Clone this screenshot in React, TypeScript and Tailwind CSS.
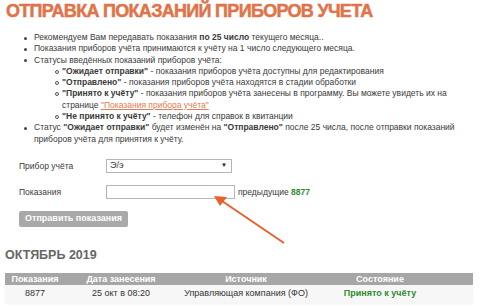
import React from "react";

function Dot() {
  return (
    <span className="w-[10px] shrink-0 flex justify-start items-start pt-[4.5px]">
      <span className="block w-[3px] h-[3px] rounded-full bg-[#444]" />
    </span>
  );
}
function Circ() {
  return (
    <span className="w-[7px] shrink-0 flex items-start pt-[4px]">
      <span className="block w-[4px] h-[4px] rounded-full border border-[#555]" />
    </span>
  );
}

export default function App() {
  return (
    <div
      className="relative w-[480px] h-[307px] overflow-hidden bg-white text-[#3a3a3a]"
      style={{ fontFamily: '"Liberation Sans", Arial, sans-serif' }}
    >
      <h1 className="pl-[6px] pt-[1px] text-[18px] leading-[20px] tracking-[-0.7px] font-bold text-[#df744a] [-webkit-text-stroke:0.5px_#df744a] whitespace-nowrap">
        ОТПРАВКА ПОКАЗАНИЙ ПРИБОРОВ УЧЕТА
      </h1>

      <ul className="mt-[11px] text-[8.5px] leading-[11.3px] whitespace-nowrap">
        <li className="flex pl-[24px]">
          <Dot />
          <span>
            Рекомендуем Вам передавать показания <b>по 25 число</b> текущего месяца..
          </span>
        </li>
        <li className="flex pl-[24px]">
          <Dot />
          <span>Показания приборов учёта принимаются к учёту на 1 число следующего месяца.</span>
        </li>
        <li className="flex pl-[24px]">
          <Dot />
          <span>Статусы введённых показаний приборов учёта:</span>
        </li>
        <li className="flex pl-[55px]">
          <Circ />
          <span>
            <b>"Ожидает отправки"</b> - показания приборов учёта доступны для редактирования
          </span>
        </li>
        <li className="flex pl-[55px]">
          <Circ />
          <span>
            <b>"Отправлено"</b> - показания приборов учёта находятся в стадии обработки
          </span>
        </li>
        <li className="flex pl-[55px]">
          <Circ />
          <span>
            <b>"Принято к учёту"</b> - показания приборов учёта занесены в программу. Вы можете увидеть их на
            <br />
            странице{" "}
            <span className="underline text-[#e07b53]">"Показания прибора учёта"</span>
          </span>
        </li>
        <li className="flex pl-[55px]">
          <Circ />
          <span>
            <b>"Не принято к учёту"</b> - телефон для справок в квитанции
          </span>
        </li>
        <li className="flex pl-[24px]">
          <Dot />
          <span>
            Статус <b>"Ожидает отправки"</b> будет изменён на <b>"Отправлено"</b> после 25 числа, после отправки показаний
            <br />
            приборов учёта для принятия к учёту.
          </span>
        </li>
      </ul>

      <div className="mt-[14px] pl-[19px] flex flex-col text-[8.5px]">
        <div className="flex items-center h-[14px]">
          <span className="w-[87px]">Прибор учёта</span>
          <div className="w-[126px] h-[14px] border border-[#b5b5b5] bg-white flex items-center justify-between pl-[3px] pr-[4px] text-[9px] text-[#333]">
            <span>Э/э</span>
            <span className="text-[6px] text-[#222]">▼</span>
          </div>
        </div>
        <div className="flex items-center h-[14px] mt-[12px]">
          <span className="w-[87px]">Показания</span>
          <div className="w-[129px] h-[14px] border border-[#b5b5b5] bg-white" />
          <span className="ml-[3px]">
            предыдущие <span className="text-[#2e8b2e] font-bold">8877</span>
          </span>
        </div>
        <div className="mt-[12px]">
          <div className="inline-flex items-center w-[109px] h-[16px] rounded-[2px] bg-[#a9a9a9] text-white font-bold text-[9px] justify-center">
            Отправить показания
          </div>
        </div>
      </div>

      <h2 className="mt-[21px] pl-[5px] text-[12.5px] leading-[15px] font-bold text-[#666]">ОКТЯБРЬ 2019</h2>

      <div className="mt-[10px] mx-[5px] w-[468px] text-[9px]">
        <div className="grid grid-cols-[60px_112px_138px_130px_28px] h-[12px] bg-[#a6a6a6] text-white font-bold items-center text-center leading-[12px]">
          <span>Показания</span>
          <span>Дата занесения</span>
          <span>Источник</span>
          <span>Состояние</span>
          <span />
        </div>
        <div className="grid grid-cols-[60px_112px_138px_130px_28px] h-[18px] bg-[#f7f7f7] items-center text-center text-[#333] shadow-[0_1px_2px_rgba(0,0,0,0.06)]">
          <span>8877</span>
          <span>25 окт в 08:20</span>
          <span>Управляющая компания (ФО)</span>
          <span className="font-bold text-[#2e8b2e]">Принято к учёту</span>
          <span />
        </div>
      </div>

      <svg className="absolute left-0 top-0 pointer-events-none" width="480" height="307">
        <line x1="284" y1="243" x2="222" y2="201" stroke="#e8612a" strokeWidth="2" />
        <polygon points="214,196 227,197 220,206" fill="#e8612a" />
      </svg>
    </div>
  );
}
